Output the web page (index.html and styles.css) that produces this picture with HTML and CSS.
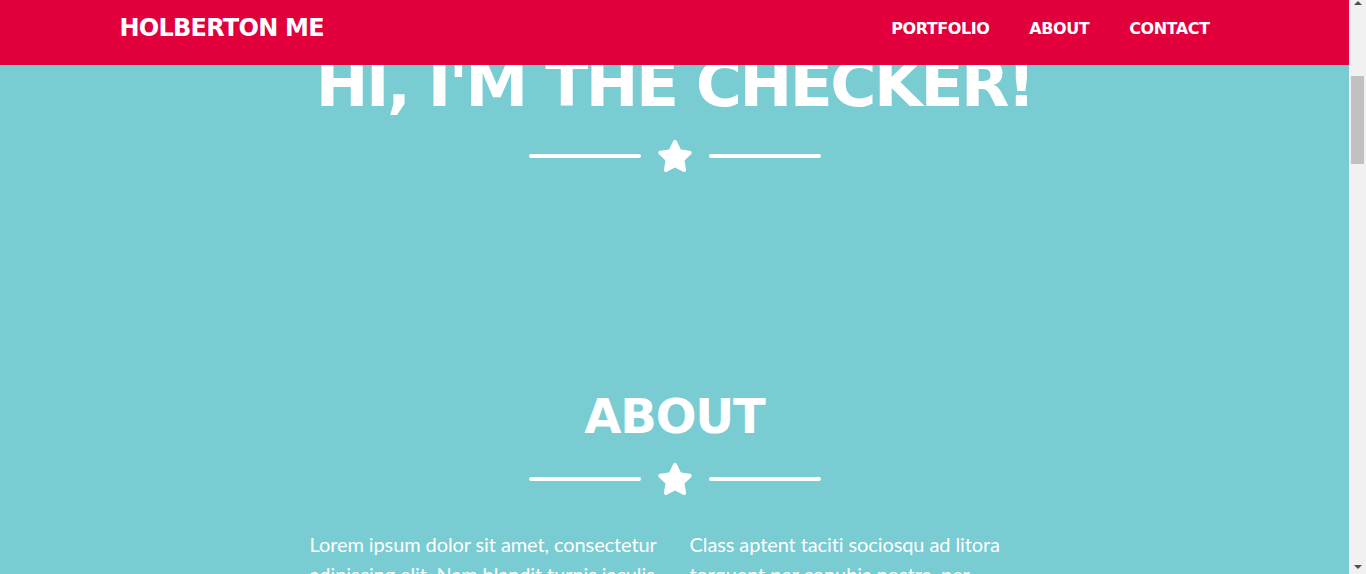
FILE: index.html
```html
<!DOCTYPE html>
<html lang="en">
<head>
<meta charset="utf-8">
<title>Holberton Me</title>
<link rel="stylesheet" href="styles.css">
</head>
<body>
<nav class="navbar">
  <div class="container nav-inner">
    <a class="brand" href="#page-top">HOLBERTON ME</a>
    <ul class="nav-links">
      <li><a href="#portfolio">PORTFOLIO</a></li>
      <li><a href="#about">ABOUT</a></li>
      <li><a href="#contact">CONTACT</a></li>
    </ul>
  </div>
</nav>

<header class="masthead" id="page-top">
  <h1 class="masthead-heading">HI, I'M THE CHECKER!</h1>
  <div class="divider">
    <span class="divider-line"></span>
    <svg class="divider-icon" viewBox="0 0 576 512" aria-hidden="true"><path d="M259.3 17.8L194 150.2 47.9 171.5c-26.2 3.8-36.7 36.1-17.7 54.6l105.7 103-25 145.5c-4.5 26.3 23.2 46 46.4 33.7L288 439.6l130.7 68.7c23.2 12.2 50.9-7.4 46.4-33.7l-25-145.5 105.7-103c19-18.5 8.5-50.8-17.7-54.6L382 150.2 316.7 17.8c-11.7-23.6-45.6-23.9-57.4 0z"/></svg>
    <span class="divider-line"></span>
  </div>
</header>

<section class="about" id="about">
  <div class="container">
    <h2 class="section-heading">ABOUT</h2>
    <div class="divider divider-about">
      <span class="divider-line"></span>
      <svg class="divider-icon" viewBox="0 0 576 512" aria-hidden="true"><path d="M259.3 17.8L194 150.2 47.9 171.5c-26.2 3.8-36.7 36.1-17.7 54.6l105.7 103-25 145.5c-4.5 26.3 23.2 46 46.4 33.7L288 439.6l130.7 68.7c23.2 12.2 50.9-7.4 46.4-33.7l-25-145.5 105.7-103c19-18.5 8.5-50.8-17.7-54.6L382 150.2 316.7 17.8c-11.7-23.6-45.6-23.9-57.4 0z"/></svg>
      <span class="divider-line"></span>
    </div>
    <div class="about-row">
      <div class="about-col">
        <p class="lead">Lorem ipsum dolor sit amet, consectetur adipiscing elit. Nam blandit turpis iaculis lacus facilisis, ac iaculis mi venenatis. Praesent nec mauris sit amet nisi tincidunt tempus.</p>
      </div>
      <div class="about-col">
        <p class="lead">Class aptent taciti sociosqu ad litora torquent per conubia nostra, per inceptos himenaeos. Duis vitae erat sit amet urna ultrices pulvinar in vel nunc.</p>
      </div>
    </div>
  </div>
</section>

<section class="contact" id="contact">
  <div class="container">
    <h2 class="section-heading">CONTACT</h2>
  </div>
</section>

<div class="scrollbar" aria-hidden="true">
  <span class="sb-up"></span>
  <span class="sb-thumb"></span>
  <span class="sb-down"></span>
</div>
</body>
</html>
```

FILE: styles.css
```css
html, body {
  padding: 0;
}

html {
  margin: 0;
}

body {
  margin: 0 17px 0 0;
  background: #78ccd2;
  color: #ffffff;
  font-family: "Lato", "Liberation Sans", sans-serif;
}

.container {
  max-width: 1140px;
  margin: 0 auto;
  padding: 0 15px;
  box-sizing: border-box;
}

/* Navbar */
.navbar {
  position: fixed;
  top: 0;
  left: 0;
  right: 17px;
  z-index: 10;
  background: #e1003c;
  padding-bottom: 9px;
}

.nav-inner {
  height: 56px;
  display: flex;
  align-items: center;
  justify-content: space-between;
}

.brand {
  color: #ffffff;
  text-decoration: none;
  font-family: "DejaVu Sans", sans-serif;
  font-weight: 700;
  font-size: 24px;
  letter-spacing: -0.75px;
}

.nav-links {
  list-style: none;
  margin: 0;
  padding: 0;
  display: flex;
}

.nav-links a {
  display: block;
  padding: 0 20px;
  color: #ffffff;
  text-decoration: none;
  font-family: "DejaVu Sans", sans-serif;
  font-weight: 700;
  font-size: 16px;
  letter-spacing: -0.45px;
}

/* Masthead */
.masthead {
  padding: 53px 0 96px;
  text-align: center;
}

.masthead-heading {
  margin: 0;
  font-family: "DejaVu Sans", sans-serif;
  font-weight: 700;
  font-size: 63px;
  line-height: 64px;
  letter-spacing: -2.5px;
}

/* Divider */
.divider {
  display: flex;
  justify-content: center;
  align-items: center;
  margin-top: 23px;
}

.divider-line {
  width: 112px;
  height: 4px;
  background: #ffffff;
  border-radius: 16px;
}

.divider-icon {
  width: 36px;
  height: 32px;
  margin: 0 16px;
  fill: #ffffff;
  display: block;
}

/* About */
.about {
  padding-top: 119px;
  padding-bottom: 96px;
  text-align: center;
}

.section-heading {
  margin: 0;
  font-family: "DejaVu Sans", sans-serif;
  font-weight: 700;
  font-size: 48px;
  line-height: 58px;
  letter-spacing: -1.2px;
}

.divider-about {
  margin-top: 18px;
  margin-bottom: 34px;
}

.about-row {
  display: flex;
  justify-content: center;
  text-align: left;
}

.about-col {
  width: 380px;
  padding: 0 15px;
  box-sizing: border-box;
}

.lead {
  margin: 0;
  font-size: 20px;
  line-height: 30px;
  font-weight: 400;
  letter-spacing: -0.1px;
  font-variant-ligatures: none;
}

.contact {
  padding: 96px 0 1200px;
  text-align: center;
}

/* Window scrollbar (classic style) */
.scrollbar {
  position: fixed;
  top: 0;
  right: 0;
  bottom: 0;
  width: 17px;
  z-index: 20;
  background: #f1f1f1;
  display: flex;
  flex-direction: column;
  align-items: center;
}

.sb-up {
  margin-top: 1px;
  width: 0;
  height: 0;
  border-left: 4px solid transparent;
  border-right: 4px solid transparent;
  border-bottom: 4px solid #505050;
}

.sb-thumb {
  margin-top: 71px;
  width: 13px;
  height: 88px;
  background: #c1c1c1;
}

.sb-down {
  margin-top: auto;
  margin-bottom: 5px;
  width: 0;
  height: 0;
  border-left: 4px solid transparent;
  border-right: 4px solid transparent;
  border-top: 4px solid #505050;
}
```
